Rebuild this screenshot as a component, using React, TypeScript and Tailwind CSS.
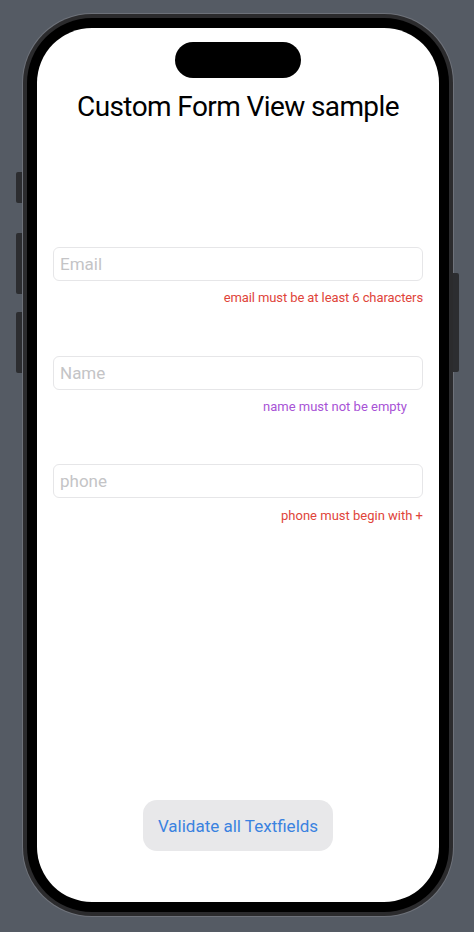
import React from "react";

export default function App() {
  const font = { fontFamily: "Roboto, 'Noto Sans', sans-serif" };
  return (
    <div className="relative w-[474px] h-[932px] bg-[#555b64] overflow-hidden" style={font}>
      {/* side buttons */}
      <div className="absolute left-[16px] top-[172px] w-[6px] h-[31px] rounded-l-[2px] bg-[#2c2d30]" />
      <div className="absolute left-[16px] top-[233px] w-[6px] h-[61px] rounded-l-[2px] bg-[#2c2d30]" />
      <div className="absolute left-[16px] top-[312px] w-[6px] h-[61px] rounded-l-[2px] bg-[#2c2d30]" />
      <div className="absolute left-[453px] top-[273px] w-[6px] h-[99px] rounded-r-[2px] bg-[#2c2d30]" />
      <div className="pt-[13px] pl-[22px]">
        <div className="w-[432px] h-[904px] rounded-[70px] bg-[#6e727a] p-[1px]">
          <div className="w-full h-full rounded-[69px] bg-[#2b2b2d] p-[4px]">
            <div className="w-full h-full rounded-[65px] bg-black p-[10px]">
              <div className="w-[402px] h-[874px] rounded-[55px] bg-white flex flex-col overflow-hidden">
                <div className="self-center mt-[14px] w-[126px] h-[36px] rounded-full bg-black" />
                <div className="mt-[12px] text-center text-[28px] leading-[34px] tracking-[-0.6px] text-black">
                  Custom Form View sample
                </div>
                <div className="px-[16px] flex flex-col">
                  <div className="mt-[123px] h-[34px] rounded-[6px] border border-[#e6e6e8] flex items-center pl-[6px] pt-[2px] text-[17px] text-[#c4c4c6]">
                    Email
                  </div>
                  <div className="mt-[9px] text-right text-[13px] leading-[16px] tracking-[-0.1px] text-[#e0443a]">
                    email must be at least 6 characters
                  </div>
                  <div className="mt-[50px] h-[34px] rounded-[6px] border border-[#e6e6e8] flex items-center pl-[6px] pt-[2px] text-[17px] text-[#c4c4c6]">
                    Name
                  </div>
                  <div className="mt-[9px] pr-[16px] text-right text-[13px] leading-[16px] text-[#a853d6]">
                    name must not be empty
                  </div>
                  <div className="mt-[49px] h-[34px] rounded-[6px] border border-[#e6e6e8] flex items-center pl-[6px] pt-[2px] text-[17px] text-[#c4c4c6]">
                    phone
                  </div>
                  <div className="mt-[10px] text-right text-[13px] leading-[16px] text-[#e0443a]">
                    phone must begin with +
                  </div>
                </div>
                <div className="mt-auto mb-[51px] self-center w-[190px] h-[51px] rounded-[14px] bg-[#e8e8ea] flex items-center justify-center pt-[2px] text-[17px] text-[#3a82e0]">
                  Validate all Textfields
                </div>
              </div>
            </div>
          </div>
        </div>
      </div>
    </div>
  );
}
